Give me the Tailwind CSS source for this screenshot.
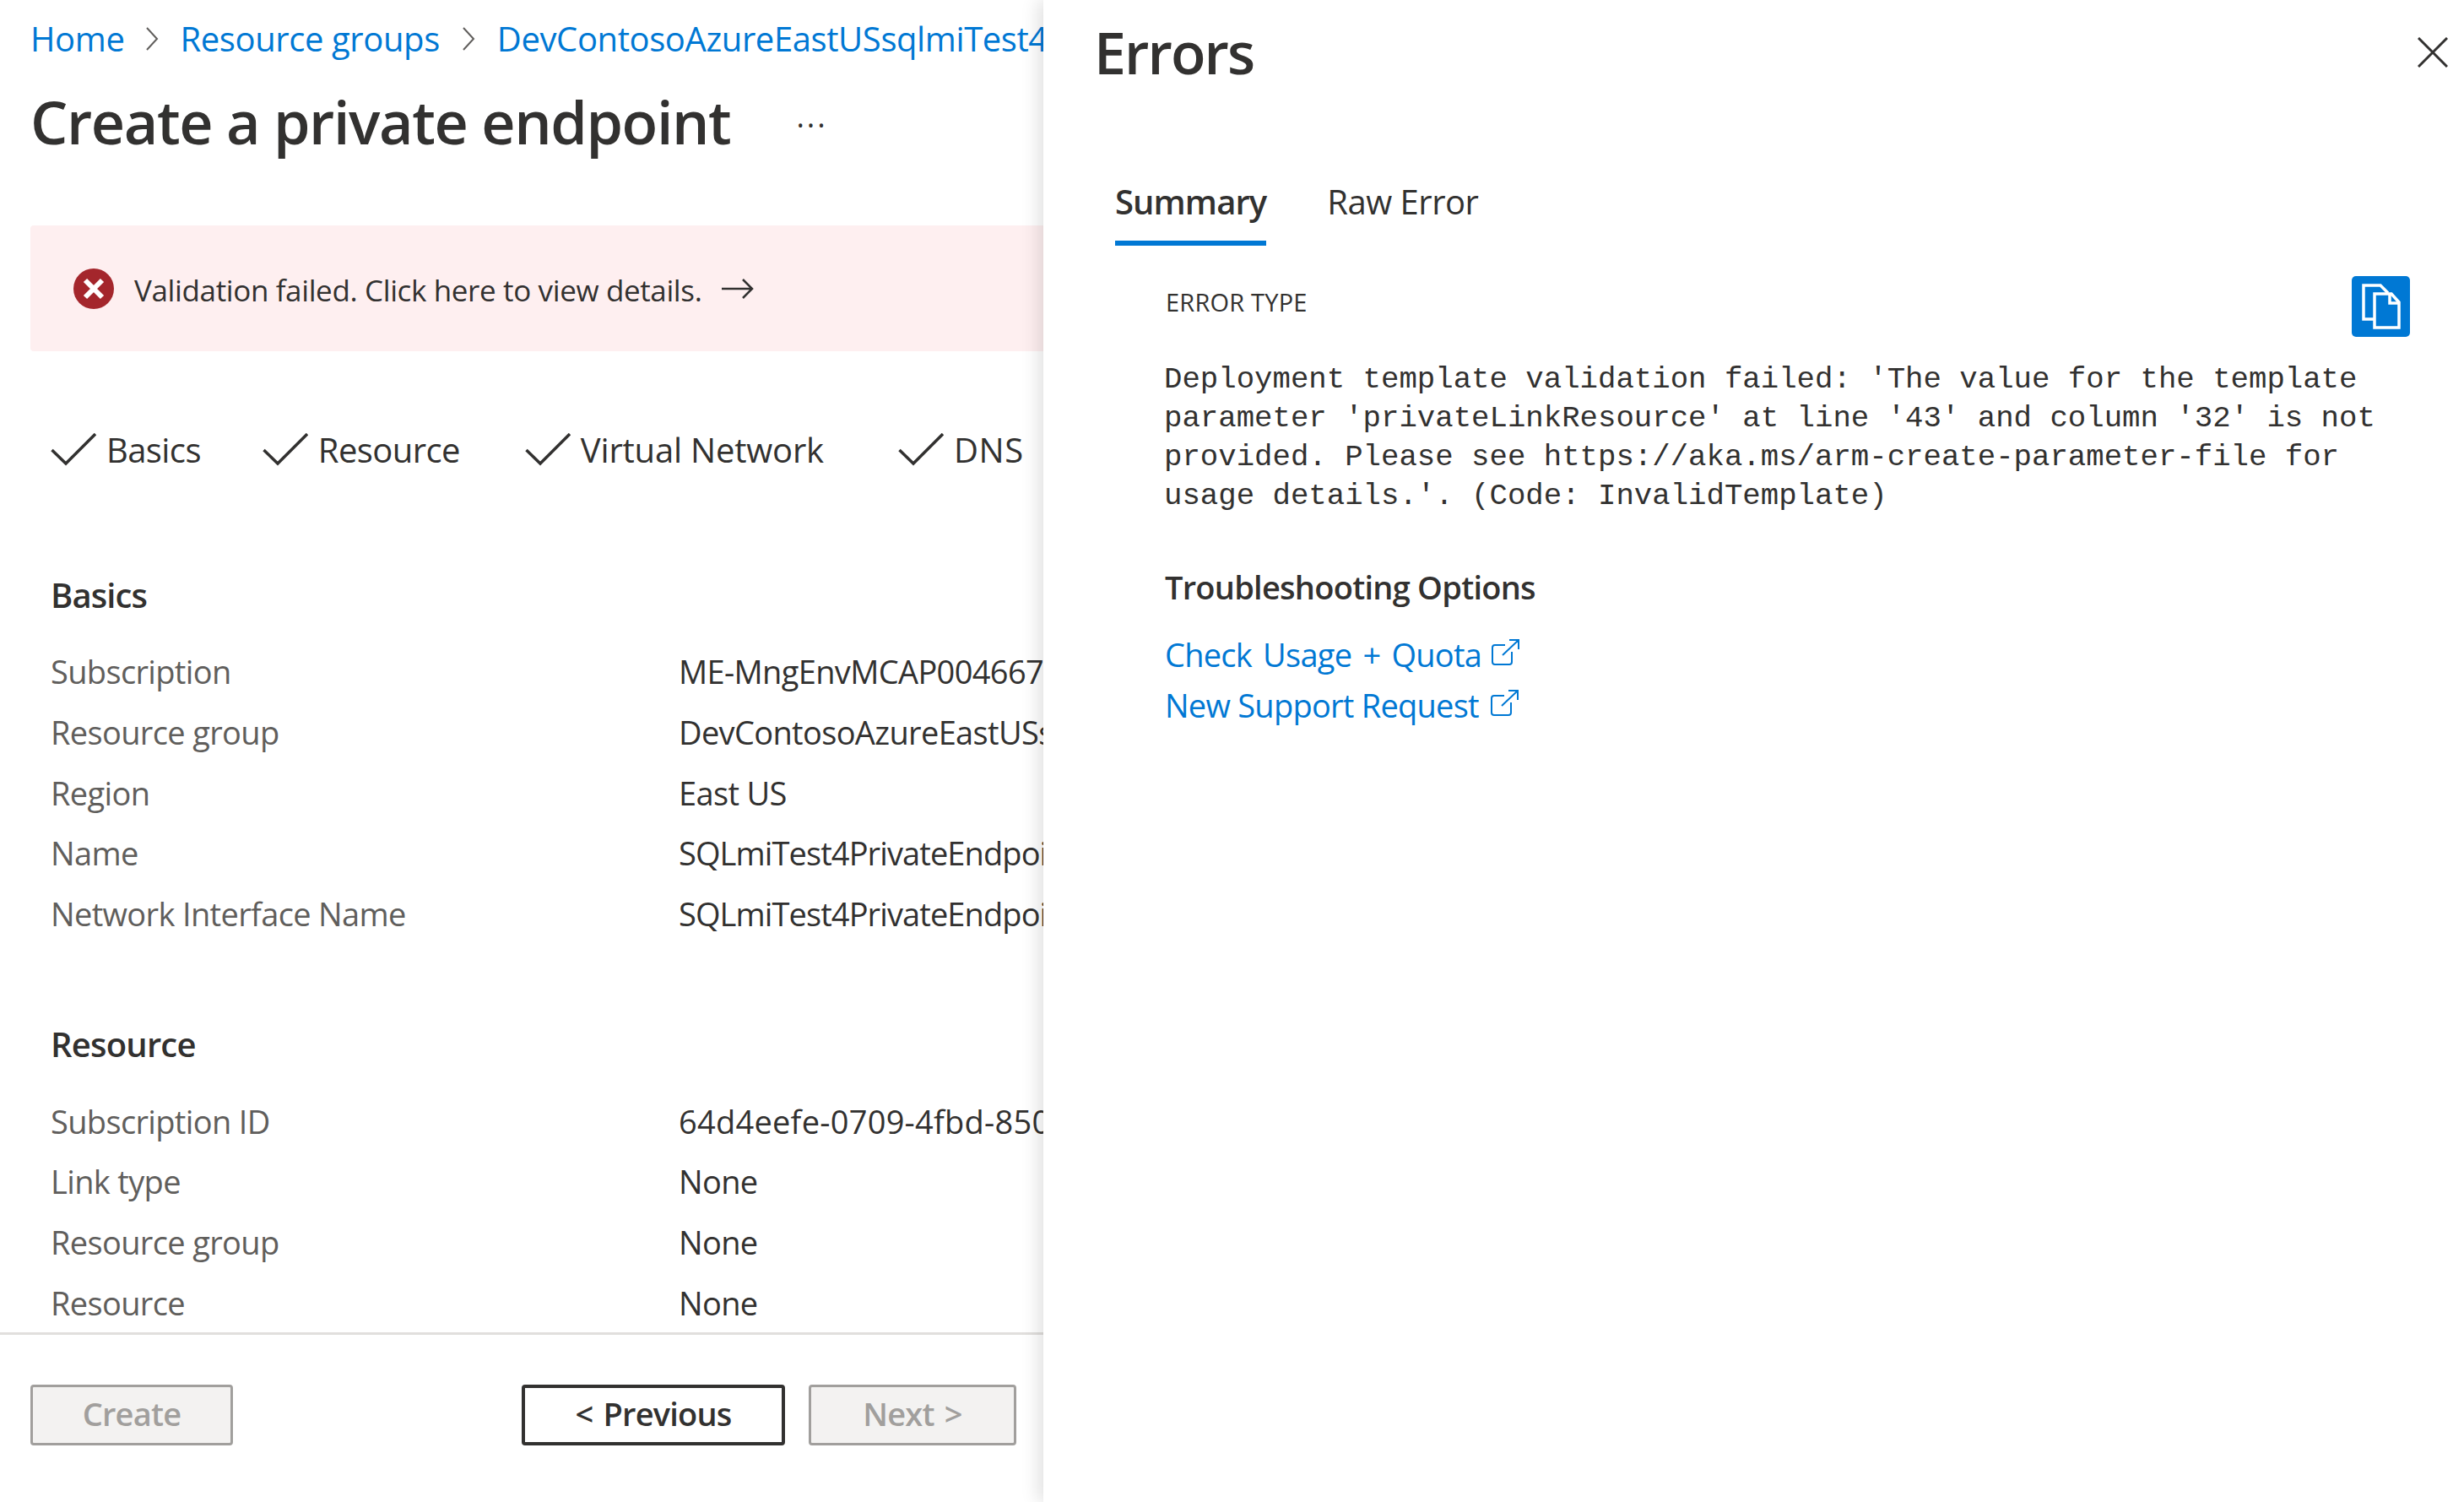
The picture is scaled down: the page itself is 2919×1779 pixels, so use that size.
<!DOCTYPE html>
<html lang="en">
<head>
  <meta charset="UTF-8" />
  <title>Create a private endpoint</title>
  <script src="https://cdn.jsdelivr.net/npm/@tailwindcss/browser@4"></script>
</head>
<body class="bg-white font-['Open_Sans',sans-serif] text-[#323130]">
  <div class="flex h-screen w-full overflow-hidden">

    <!-- Left blade -->
    <div class="flex flex-col w-[1236px] shrink-0 overflow-hidden whitespace-nowrap">
      <div class="flex items-center h-[92px] pl-[36px] text-[40px] tracking-[-0.4px] text-[#0078d4]">
        <span>Home</span>
        <svg class="mx-[25px] shrink-0" width="16" height="30" viewBox="0 0 16 30" fill="none" stroke="#605e5c" stroke-width="2"><path d="M2 2l12 13L2 28"/></svg>
        <span>Resource groups</span>
        <svg class="mx-[26px] shrink-0" width="16" height="30" viewBox="0 0 16 30" fill="none" stroke="#605e5c" stroke-width="2"><path d="M2 2l12 13L2 28"/></svg>
        <span>DevContosoAzureEastUSsqlmiTest4</span>
      </div>
      <div class="flex items-center h-[112px] pl-[36px] pb-[7px]">
        <h1 class="text-[70px] font-semibold tracking-[-1.4px]">Create a private endpoint</h1>
        <span class="ml-[78px] mb-[14px] text-[36px] tracking-[3px]">...</span>
      </div>

      <!-- Validation banner -->
      <div class="flex items-center mt-[63px] ml-[36px] h-[149px] pl-[51px] bg-[#feeff0] rounded-l-[4px] text-[35px] tracking-[-0.37px]">
        <svg class="shrink-0" width="48" height="48" viewBox="0 0 48 48"><circle cx="24" cy="24" r="24" fill="#a4262c"/><path d="M14 14l20 20M34 14L14 34" stroke="#fff" stroke-width="6"/></svg>
        <span class="ml-[24px] pt-[5px]">Validation failed. Click here to view details.</span>
        <svg class="ml-[24px] shrink-0" width="38" height="26" viewBox="0 0 38 26" fill="none" stroke="#323130" stroke-width="2.5"><path d="M0 13h36M25 2l11 11-11 11"/></svg>
      </div>

      <!-- Wizard steps -->
      <div class="flex items-center mt-[67px] h-[100px] pl-[60px] text-[40px] tracking-[-0.6px]">
        <svg class="shrink-0" width="54" height="40" viewBox="0 0 54 40" fill="none" stroke="#323130" stroke-width="3.5"><path d="M1.5 20L18 36 53 1"/></svg>
        <span class="ml-[12px]">Basics</span>
        <svg class="ml-[73px] shrink-0" width="54" height="40" viewBox="0 0 54 40" fill="none" stroke="#323130" stroke-width="3.5"><path d="M1.5 20L18 36 53 1"/></svg>
        <span class="ml-[12px]">Resource</span>
        <svg class="ml-[77px] shrink-0" width="54" height="40" viewBox="0 0 54 40" fill="none" stroke="#323130" stroke-width="3.5"><path d="M1.5 20L18 36 53 1"/></svg>
        <span class="ml-[12px] tracking-[-0.2px]">Virtual Network</span>
        <svg class="ml-[88px] shrink-0" width="54" height="40" viewBox="0 0 54 40" fill="none" stroke="#323130" stroke-width="3.5"><path d="M1.5 20L18 36 53 1"/></svg>
        <span class="ml-[12px] tracking-[0.6px]">DNS</span>
      </div>

      <!-- Summary, cut off by the footer -->
      <div class="flex-1 min-h-0 overflow-hidden pl-[60px] mt-[88px] text-[38px] tracking-[-0.65px]">
        <h2 class="flex items-center h-[68px] text-[40px] font-semibold tracking-[-0.9px]">Basics</h2>
        <div class="mt-[21px]">
          <div class="grid grid-cols-[744px_1fr] items-center h-[71.7px]"><span class="text-[#605e5c]">Subscription</span><span>ME-MngEnvMCAP004667</span></div>
          <div class="grid grid-cols-[744px_1fr] items-center h-[71.7px]"><span class="text-[#605e5c]">Resource group</span><span>DevContosoAzureEastUSsqlmi</span></div>
          <div class="grid grid-cols-[744px_1fr] items-center h-[71.7px]"><span class="text-[#605e5c]">Region</span><span>East US</span></div>
          <div class="grid grid-cols-[744px_1fr] items-center h-[71.7px]"><span class="text-[#605e5c]">Name</span><span class="tracking-[-0.9px]">SQLmiTest4PrivateEndpoint</span></div>
          <div class="grid grid-cols-[744px_1fr] items-center h-[71.7px]"><span class="text-[#605e5c]">Network Interface Name</span><span class="tracking-[-0.9px]">SQLmiTest4PrivateEndpoint-nic</span></div>
        </div>
        <h2 class="flex items-center h-[68px] mt-[85px] text-[40px] font-semibold tracking-[-0.8px]">Resource</h2>
        <div class="mt-[21px]">
          <div class="grid grid-cols-[744px_1fr] items-center h-[71.7px]"><span class="text-[#605e5c]">Subscription ID</span><span class="tracking-[0.25px]">64d4eefe-0709-4fbd-8505</span></div>
          <div class="grid grid-cols-[744px_1fr] items-center h-[71.7px]"><span class="text-[#605e5c]">Link type</span><span>None</span></div>
          <div class="grid grid-cols-[744px_1fr] items-center h-[71.7px]"><span class="text-[#605e5c]">Resource group</span><span>None</span></div>
          <div class="grid grid-cols-[744px_1fr] items-center h-[71.7px]"><span class="text-[#605e5c]">Resource</span><span>None</span></div>
        </div>
      </div>

      <!-- Footer buttons -->
      <div class="flex items-start shrink-0 h-[201px] pt-[59px] pl-[36px] border-t-[3px] border-[#e1dfdd] text-[38px] font-semibold tracking-[-0.8px]">
        <button class="w-[240px] h-[72px] pb-[3px] rounded-[4px] border-[3px] border-[#a19f9d] bg-[#f3f2f1] text-[#a19f9d]">Create</button>
        <button class="ml-[342px] w-[312px] h-[72px] pb-[3px] rounded-[4px] border-[4px] border-[#323130] bg-white [word-spacing:3px]">&lt; Previous</button>
        <button class="ml-[28px] w-[246px] h-[72px] pb-[3px] rounded-[4px] border-[3px] border-[#a19f9d] bg-[#f3f2f1] text-[#a19f9d] [word-spacing:3px]">Next &gt;</button>
      </div>
    </div>

    <!-- Errors panel -->
    <div class="relative z-10 flex-1 min-w-0 flex flex-col bg-white shadow-[-6px_0_20px_rgba(0,0,0,0.12)]">
      <div class="flex items-center justify-between h-[124px] pl-[60px] pr-[19px]">
        <h2 class="text-[68px] font-semibold tracking-[-1.9px]">Errors</h2>
        <svg width="36" height="36" viewBox="0 0 36 36" fill="none" stroke="#323130" stroke-width="3"><path d="M1 1l34 34M35 1L1 35"/></svg>
      </div>
      <div class="flex mt-[66px] pl-[85px] h-[101px] text-[40px] tracking-[-0.9px]">
        <div class="flex items-center h-full pt-[3px] pb-[1px] border-b-[6px] border-[#0078d4] font-semibold">Summary</div>
        <div class="flex items-center h-full pt-[3px] pb-[1px] ml-[72px] border-b-[6px] border-transparent tracking-[-0.5px]">Raw Error</div>
      </div>

      <div class="pl-[145px] pr-[64px]">
        <div class="flex justify-between mt-[36px] h-[72px]">
          <span class="mt-[11px] h-[40px] text-[29px] leading-[40px] font-medium tracking-[0.2px]">ERROR TYPE</span>
          <button class="flex items-center justify-center w-[69px] h-[72px] rounded-[5px] bg-[#0078d4]">
            <svg width="46" height="54" viewBox="0 0 46 54" fill="none" stroke="#fff" stroke-width="3.5"><path d="M15 42H2V2h20l9 9"/><path d="M15 12h20l9 10v30H15z"/><path d="M33 12v11h11"/></svg>
          </button>
        </div>
        <p class="mt-[28px] -ml-[2px] w-[1460px] font-['Liberation_Mono',monospace] text-[35.7px] leading-[46px]">Deployment template validation failed: 'The value for the template parameter 'privateLinkResource' at line '43' and column '32' is not provided. Please see https://aka.ms/arm-create-parameter-file for usage details.'. (Code: InvalidTemplate)</p>
        <h3 class="mt-[59px] -ml-[1px] h-[50px] leading-[50px] text-[38px] font-semibold tracking-[-0.75px]">Troubleshooting Options</h3>
        <div class="mt-[25px] -ml-[1px] text-[38px] tracking-[-0.75px] text-[#0078d4]">
          <div class="flex items-center h-[60px]">
            <span class="[word-spacing:4px]">Check Usage + Quota</span>
            <svg class="ml-[12px] mb-[6px]" width="33" height="31" viewBox="0 0 33 31" fill="none" stroke="#0078d4" stroke-width="2"><path d="M16 7H4a3 3 0 0 0-3 3v17a3 3 0 0 0 3 3h17a3 3 0 0 0 3-3V15M13 19L32 1M21 1h11v11"/></svg>
          </div>
          <div class="flex items-center h-[60px]">
            <span>New Support Request</span>
            <svg class="ml-[14px] mb-[6px]" width="33" height="31" viewBox="0 0 33 31" fill="none" stroke="#0078d4" stroke-width="2"><path d="M16 7H4a3 3 0 0 0-3 3v17a3 3 0 0 0 3 3h17a3 3 0 0 0 3-3V15M13 19L32 1M21 1h11v11"/></svg>
          </div>
        </div>
      </div>
    </div>
  </div>
</body>
</html>
